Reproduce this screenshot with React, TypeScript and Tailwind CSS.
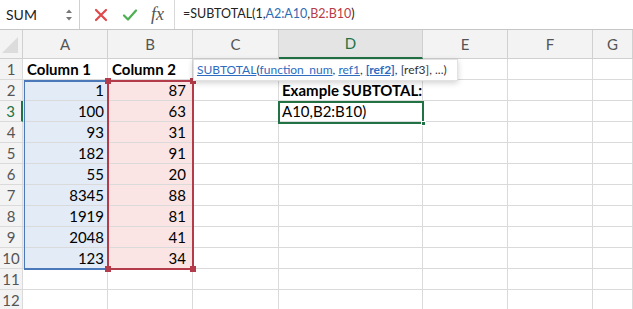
import { ReactNode } from 'react'

const COLS = ['A', 'B', 'C', 'D', 'E', 'F', 'G']
const COL_A = ['Column 1', '1', '100', '93', '182', '55', '8345', '1919', '2048', '123']
const COL_B = ['Column 2', '87', '63', '31', '91', '20', '88', '81', '41', '34']

const FONT = { fontFamily: 'Lato, "Open Sans", "Liberation Sans", sans-serif' }

function Cell({ children, className = '' }: { children?: ReactNode; className?: string }) {
  return (
    <div className={`h-[21px] border-r border-b border-[#dadada] flex items-center overflow-visible whitespace-nowrap text-[15px] text-black ${className}`}>
      {children}
    </div>
  )
}

function FormulaBar() {
  return (
    <div className="h-[30px] flex items-center bg-white border-b border-[#c6c6c6]">
      <div className="w-[80px] h-full flex items-center justify-between pl-[6px] pr-[6px] border-r border-[#d0d0d0]">
        <span className="text-[14px] text-[#222]">SUM</span>
        <svg width="8" height="14" viewBox="0 0 8 14">
          <path d="M1 5 L4 1.5 L7 5 Z" fill="#777" />
          <path d="M1 9 L4 12.5 L7 9 Z" fill="#777" />
        </svg>
      </div>
      <div className="w-[95px] h-full flex items-center border-r border-[#d8d8d8] my-[4px]">
        <svg width="14" height="14" viewBox="0 0 14 14" className="ml-[14px]">
          <path d="M2 2 L12 12 M12 2 L2 12" stroke="#e0484a" strokeWidth="2.2" strokeLinecap="round" />
        </svg>
        <svg width="16" height="14" viewBox="0 0 16 14" className="ml-[14px]">
          <path d="M2 7.5 L6 11.5 L14 2.5" stroke="#4caf50" strokeWidth="2.2" fill="none" strokeLinecap="round" strokeLinejoin="round" />
        </svg>
        <span className="ml-[13px] text-[18px] italic text-[#555]" style={{ fontFamily: '"Liberation Serif", serif' }}>
          fx
        </span>
      </div>
      <div className="pl-[8px] text-[12.5px] text-[#222]">
        =SUBTOTAL(1,<span className="text-[#2e6db5]">A2:A10</span>,<span className="text-[#b83c46]">B2:B10</span>)
      </div>
    </div>
  )
}

export default function App() {
  const rows = Array.from({ length: 12 }, (_, i) => i + 1)
  return (
    <div className="w-[633px] h-[309px] overflow-hidden bg-white" style={FONT}>
      <FormulaBar />
      <div className="relative">
        <div className="grid grid-cols-[23px_85px_85px_86px_144px_85px_85px_1fr]">
          {/* header row */}
          <div className="h-[29px] bg-[#f3f3f3] border-r border-b border-[#d0d0d0] relative">
            <svg width="18" height="18" viewBox="0 0 18 18" className="absolute right-[3px] bottom-[4px]">
              <path d="M17 1 L17 17 L1 17 Z" fill="#dcdcdc" />
            </svg>
          </div>
          {COLS.map((c) => (
            <div
              key={c}
              className={
                c === 'D'
                  ? 'h-[29px] flex items-center justify-center bg-[#e4e4e4] border-r border-b-2 border-r-[#d0d0d0] border-b-[#217346] text-[15px] text-[#217346]'
                  : 'h-[29px] flex items-center justify-center bg-[#f3f3f3] border-r border-b border-[#d0d0d0] text-[15px] text-[#555]'
              }
            >
              {c}
            </div>
          ))}
          {rows.map((r) => {
            const a = COL_A[r - 1]
            const b = COL_B[r - 1]
            const inRange = r >= 2 && r <= 10
            return [
              <div
                key={`h${r}`}
                className={
                  r === 3
                    ? 'h-[21px] flex items-center justify-center bg-[#f3f3f3] border-r-2 border-b border-r-[#217346] border-b-[#dadada] text-[15px] text-[#217346]'
                    : 'h-[21px] flex items-center justify-center bg-[#f3f3f3] border-r border-b border-[#dadada] text-[15px] text-[#555]'
                }
              >
                {r}
              </div>,
              <Cell key={`a${r}`} className={`${r === 1 ? 'font-bold pl-[4px]' : 'justify-end pr-[3px]'} ${inRange ? 'bg-[#e3ebf6]' : ''}`}>
                {a}
              </Cell>,
              <Cell key={`b${r}`} className={`${r === 1 ? 'font-bold pl-[4px]' : 'justify-end pr-[6px]'} ${inRange ? 'bg-[#fbe4e4]' : ''}`}>
                {b}
              </Cell>,
              <Cell key={`c${r}`} />,
              <Cell key={`d${r}`} className="pl-[3px]">
                {r === 2 ? <span className="font-bold">Example SUBTOTAL:</span> : r === 3 ? 'A10,B2:B10)' : null}
              </Cell>,
              <Cell key={`e${r}`} />,
              <Cell key={`f${r}`} />,
              <Cell key={`g${r}`} />,
            ]
          })}
        </div>

        {/* blue range A2:A10 */}
        <div className="absolute left-[24px] top-[50px] w-[85px] h-[190px] border-t-2 border-b-2 border-l border-[#4a78b8] pointer-events-none" />
        {/* red range B2:B10 */}
        <div className="absolute left-[107px] top-[50px] w-[87px] h-[190px] border-2 border-[#b43c4a] pointer-events-none" />
        <div className="absolute left-[105px] top-[48px] w-[6px] h-[6px] bg-[#b43c4a]" />
        <div className="absolute left-[190px] top-[48px] w-[6px] h-[6px] bg-[#b43c4a]" />
        <div className="absolute left-[105px] top-[236px] w-[6px] h-[6px] bg-[#b43c4a]" />
        <div className="absolute left-[190px] top-[236px] w-[6px] h-[6px] bg-[#b43c4a]" />

        {/* active cell D3 */}
        <div className="absolute left-[278px] top-[71px] w-[146px] h-[23px] border-2 border-[#217346] pointer-events-none" />
        <div className="absolute left-[421px] top-[91px] w-[5px] h-[5px] bg-[#217346] border border-white" />

        {/* function tooltip */}
        <div className="absolute left-[193px] top-[29px] h-[22px] pl-[3px] pr-[10px] flex items-center bg-white border border-[#e2e2e2] shadow-[0_2px_6px_rgba(0,0,0,0.18)] text-[12px] text-[#333] whitespace-nowrap">
          <span className="text-[#2d6cc0] underline">SUBTOTAL</span>
          <span>(</span>
          <span className="text-[#2d6cc0] underline">function_num</span>
          <span>,&nbsp;</span>
          <span className="text-[#2d6cc0] underline">ref1</span>
          <span>,&nbsp;</span>
          <span className="text-[#2d6cc0] underline font-bold">[ref2]</span>
          <span>, [ref3], ...)</span>
        </div>
      </div>
    </div>
  )
}
